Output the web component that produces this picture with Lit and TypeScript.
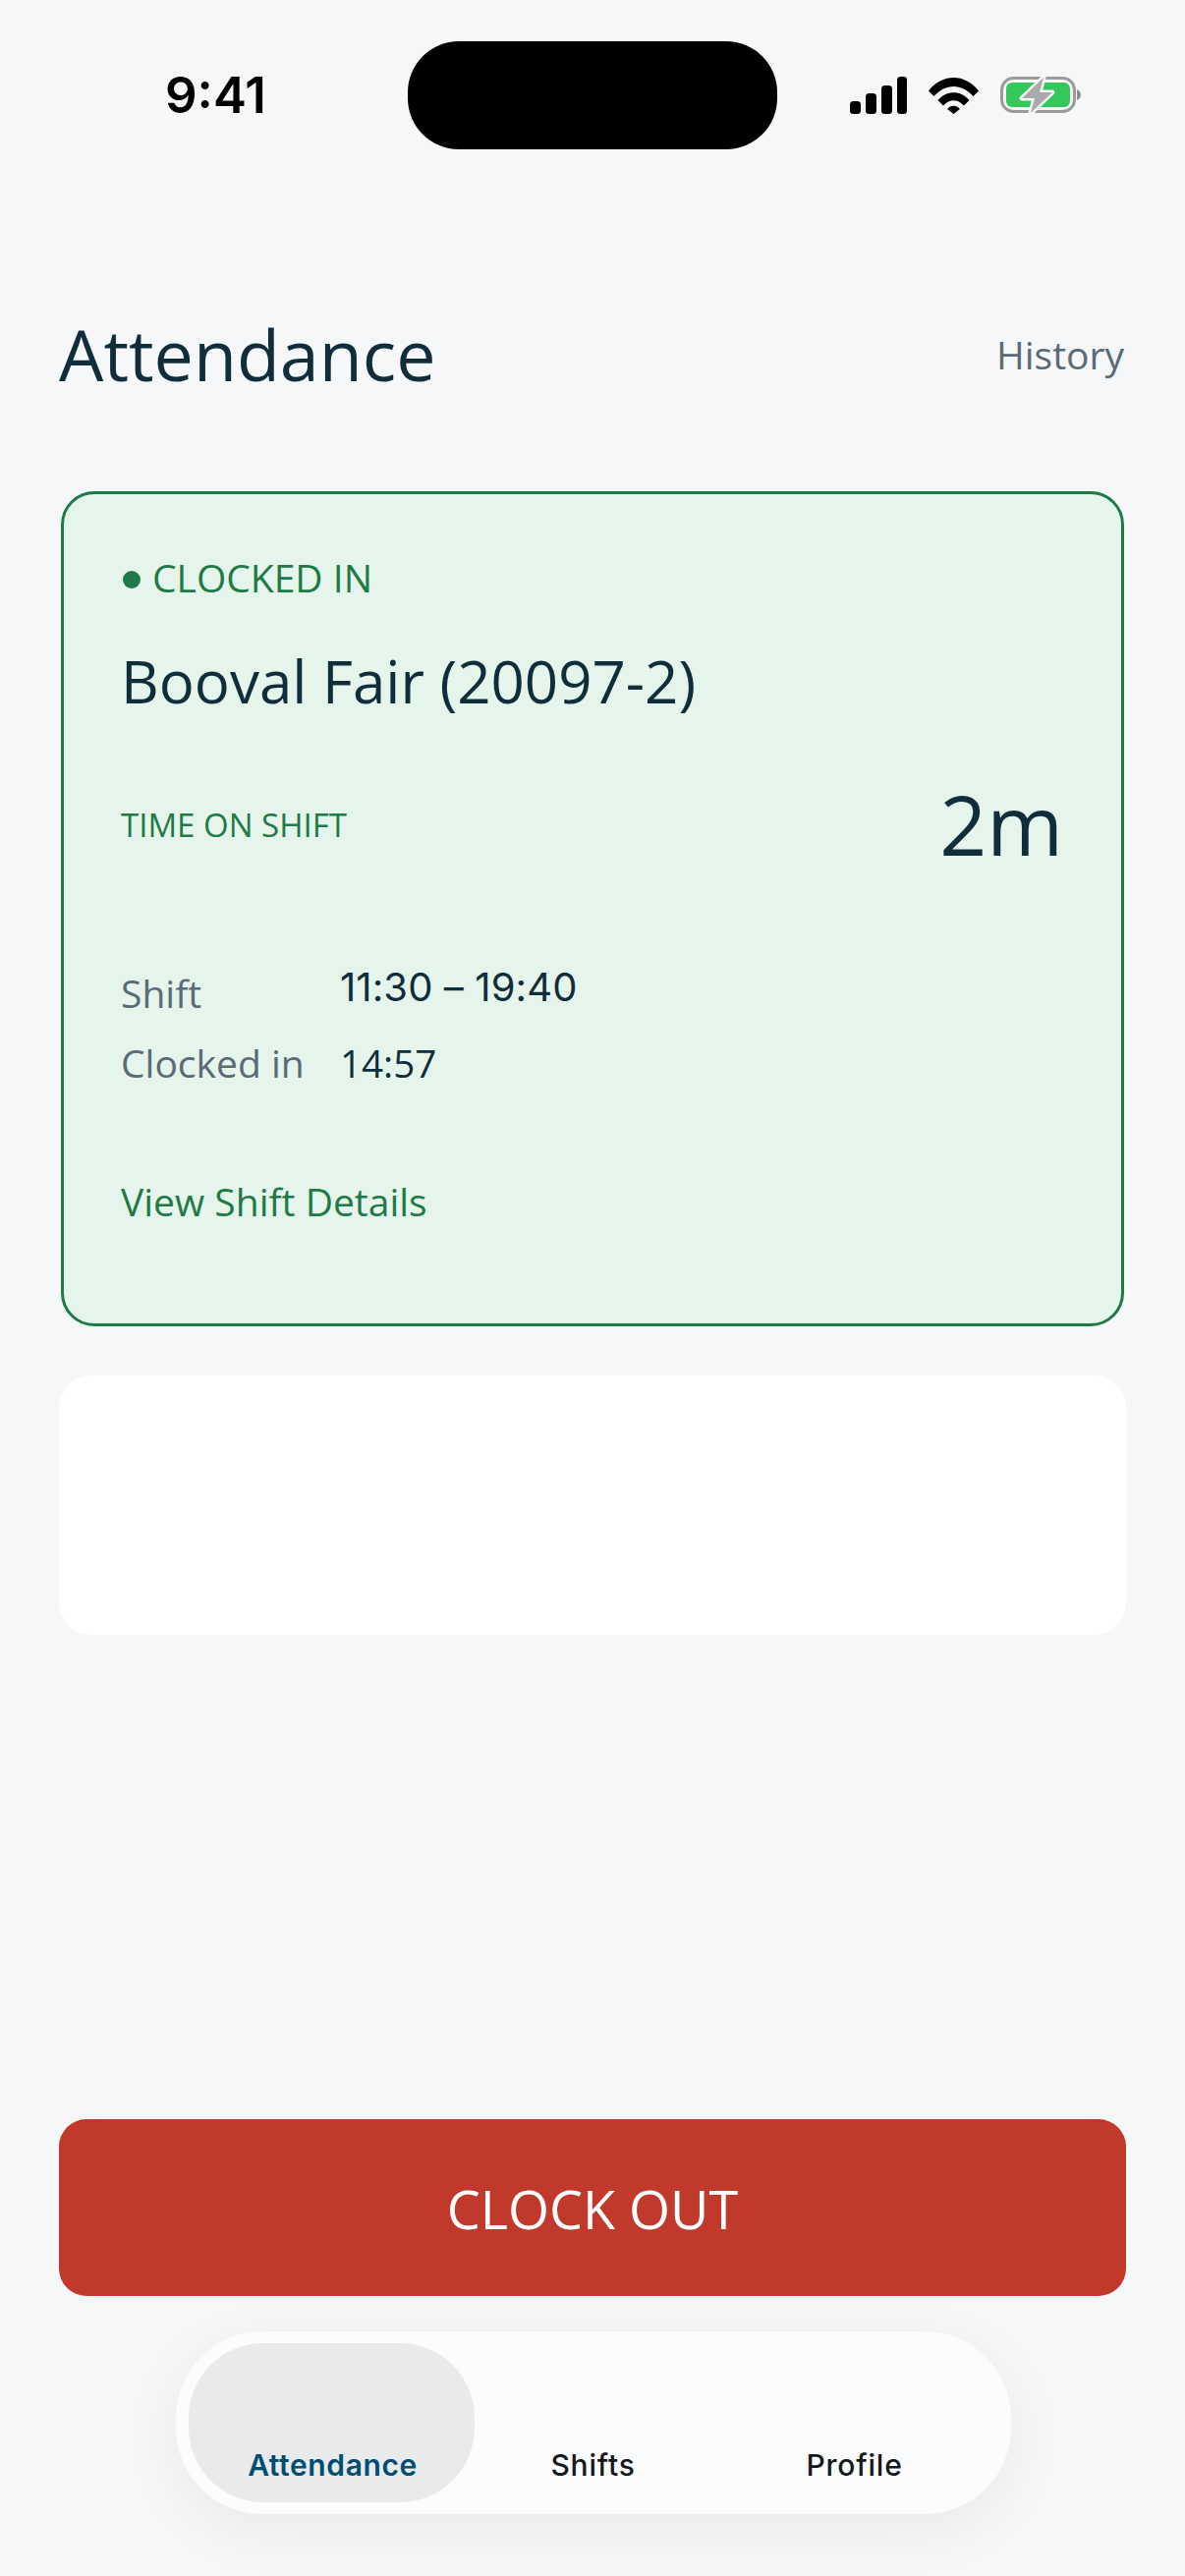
import { LitElement, html, css } from "lit";
import { customElement } from "lit/decorators.js";

@customElement("app-root")
export class AppRoot extends LitElement {
  static styles = css`
    :host { display: block; width: 1206px; height: 2622px; overflow: hidden; background: #f6f7f9; font-family: "Open Sans", sans-serif; color: #0f2d3a; }
    .page { display: flex; flex-direction: column; height: 2622px; box-sizing: border-box; padding: 0 60px; }
    .status { height: 152px; margin: 0 -60px; padding: 42px 0 0 168px; box-sizing: border-box; display: flex; align-items: flex-start; flex: none; }
    .time { width: 247px; font-family: Inter, sans-serif; font-weight: 600; font-size: 51px; line-height: 110px; color: #000; letter-spacing: 0; }
    .island { width: 376px; height: 110px; border-radius: 52px; background: #000; }
    .sys { margin: 34px 0 0 74px; display: flex; align-items: center; gap: 22px; height: 42px; }
    .sys svg { display: block; flex: none; }
    .head { display: flex; justify-content: space-between; align-items: center; margin-top: 168px; height: 80px; flex: none; padding-right: 2px; }
    h1 { margin: 0; font-size: 71.8px; font-weight: 400; line-height: 80px; color: #0f2d3a; }
    .hist { font-size: 39px; color: #5a6b78; }
    .card { margin: 100px 2px 0; height: 850px; box-sizing: border-box; flex: none; background: #e6f5eb; border: 3px solid #1e7a46; border-radius: 34px; padding: 59px 59px 0 58px; }
    .st { display: flex; align-items: center; gap: 12px; font-size: 39px; line-height: 52px; color: #1e7a46; padding-left: 2px; }
    .dot { width: 18px; height: 18px; border-radius: 50%; background: #1e7a46; margin-top: 3px; }
    .site { font-size: 60px; line-height: 80px; margin-top: 39px; color: #0f2d3a; }
    .tos { display: flex; justify-content: space-between; align-items: center; margin-top: 56px; height: 100px; }
    .tos span { font-size: 33px; color: #1e7a46; }
    .tos b { font-weight: 400; font-size: 84px; color: #0f2d3a; line-height: 100px; }
    .rows { margin-top: 95px; display: grid; grid-template-columns: 224px 1fr; row-gap: 17px; }
    .lbl { font-size: 39px; line-height: 54px; color: #5a6b78; }
    .val { font-size: 38.5px; line-height: 54px; color: #0f2d3a; margin-left: -1px; }
    .val.a { font-family: Inter, sans-serif; font-size: 40px; margin-top: -6px; letter-spacing: .1px; }
    .link { margin-top: 87px; font-size: 39px; line-height: 54px; color: #1e7a46; }
    .blank { margin-top: 50px; height: 264px; flex: none; background: #fff; border-radius: 32px; }
    .spacer { flex: 1; }
    .btn { flex: none; height: 180px; box-sizing: border-box; padding-top: 2px; border-radius: 28px; background: #c0392b; color: #fff; display: flex; align-items: center; justify-content: center; font-size: 54px; }
    .nav { flex: none; align-self: center; margin: 36px 0 63px 2px; width: 850px; height: 186px; box-sizing: border-box; padding: 12px 0; background: #fbfcfe; border-radius: 88px; box-shadow: 0 16px 60px rgba(0,0,0,.06); display: flex; justify-content: center; }
    .tab { width: 266px; border-radius: 76px; display: flex; justify-content: center; align-items: flex-end; box-sizing: border-box; padding-bottom: 18px; font-family: Inter, sans-serif; font-weight: 500; font-size: 30px; line-height: 40px; letter-spacing: .8px; color: #16191c; }
    .tab.on { width: 291px; margin: 0 -12.500px 0 -13.500px; padding-left: 2px; letter-spacing: .6px; background: #e9eaec; color: #004f71; font-weight: 600; }
    .bolt { paint-order: stroke; }
  `;

  render() {
    return html`<div class="page">
      <div class="status">
        <div class="time">9:41</div>
        <div class="island"></div>
        <div class="sys">
          <svg width="58" height="38" viewBox="0 0 58 38"><rect x="0" y="25" width="11" height="13" rx="3.5"/><rect x="16" y="17" width="11" height="21" rx="3.5"/><rect x="32" y="9" width="11" height="29" rx="3.5"/><rect x="48" y="0" width="10" height="38" rx="3.5"/></svg>
          <svg width="51" height="38" viewBox="0 0 51 38"><path d="M0 14.5C14-3.5 37-3.5 51 14.5L45.5 20C34 6.5 17 6.5 5.5 20Z"/><path d="M9.5 24C18 13.5 33 13.5 41.500 24L36 29.500C29.500 22.500 21.500 22.500 15 29.500Z"/><path d="M19 33C22.500 28.500 28.500 28.500 32 33L25.500 38Z"/></svg>
          <svg width="82" height="42" viewBox="0 0 82 42">
            <rect x="1.500" y="3.500" width="74" height="34" rx="12" fill="none" stroke="#9b9b9b" stroke-width="3"/>
            <rect x="6" y="8" width="65" height="25" rx="6" fill="#34c759"/>
            <path d="M78 15C80.500 16 82 18 82 20.500C82 23 80.500 25 78 26Z" fill="#8e8e8e"/>
            <path class="bolt" d="M44 3L22 24H35L31 39L53 18H40Z" fill="#aaa" stroke="#f6f7f9" stroke-width="5" stroke-linejoin="round"/>
          </svg>
        </div>
      </div>
      <div class="head"><h1>Attendance</h1><div class="hist">History</div></div>
      <section class="card">
        <div class="st"><span class="dot"></span>CLOCKED IN</div>
        <div class="site">Booval Fair (20097-2)</div>
        <div class="tos"><span>TIME ON SHIFT</span><b>2m</b></div>
        <div class="rows">
          <div class="lbl">Shift</div><div class="val a">11:30 – 19:40</div>
          <div class="lbl">Clocked in</div><div class="val">14:57</div>
        </div>
        <div class="link">View Shift Details</div>
      </section>
      <div class="blank"></div>
      <div class="spacer"></div>
      <div class="btn">CLOCK OUT</div>
      <nav class="nav">
        <div class="tab on">Attendance</div>
        <div class="tab">Shifts</div>
        <div class="tab">Profile</div>
      </nav>
    </div>`;
  }
}
